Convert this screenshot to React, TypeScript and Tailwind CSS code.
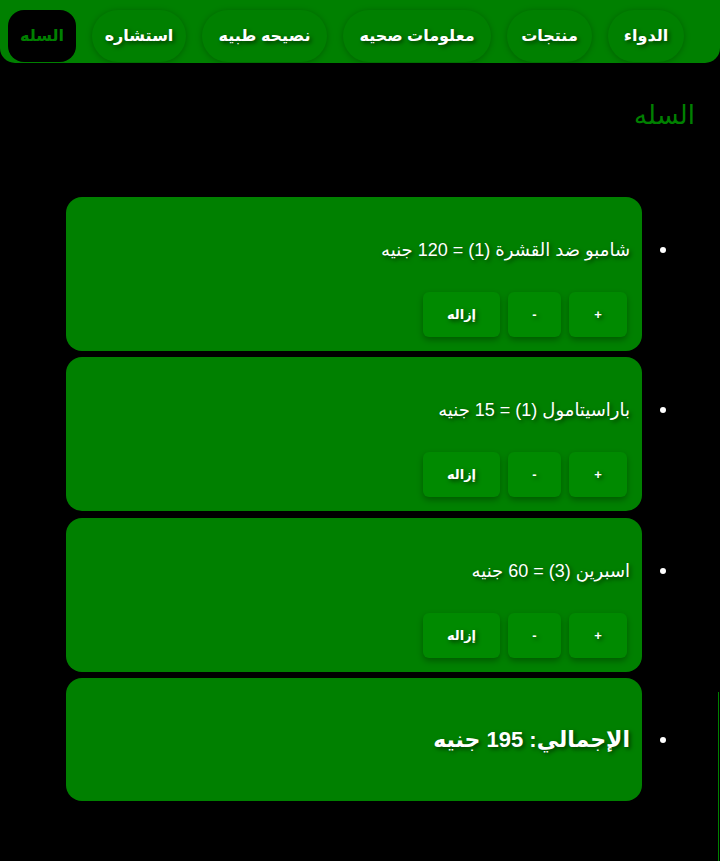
const navItems = [
  { label: "الدواء", w: "w-[76px]" },
  { label: "منتجات", w: "w-[85px]" },
  { label: "معلومات صحيه", w: "w-[148px]" },
  { label: "نصيحه طبيه", w: "w-[125px]" },
  { label: "استشاره", w: "w-[94px]" },
];

const cartItems = [
  { name: "شامبو ضد القشرة", qty: 1, total: 120 },
  { name: "باراسيتامول", qty: 1, total: 15 },
  { name: "اسبرين", qty: 3, total: 60 },
];

const shadowText = "[text-shadow:2px_2px_4px_rgba(0,0,0,0.55)]";

function Bullet({ top }: { top: string }) {
  return (
    <div className={`w-[78px] shrink-0 pr-[54px] ${top}`}>
      <div className="w-[6px] h-[6px] rounded-full bg-white" />
    </div>
  );
}

function CartButton({ label, w }: { label: string; w: string }) {
  return (
    <button
      className={`${w} h-[45px] rounded-[6px] bg-[#008a00] text-white text-[13px] font-bold shadow-[0_3px_6px_rgba(0,0,0,0.3)] ${shadowText}`}
    >
      {label}
    </button>
  );
}

export default function App() {
  return (
    <div
      dir="rtl"
      className="relative min-h-screen bg-black font-['Liberation_Sans','DejaVu_Sans',sans-serif]"
    >
      <nav className="h-[63px] bg-[#008000] rounded-b-[15px] flex items-start gap-4 pt-[10px] pr-[36px]">
        {navItems.map((item) => (
          <a
            key={item.label}
            className={`${item.w} h-[52px] rounded-[26px] flex items-center justify-center text-white text-[16px] font-bold shadow-[0_1px_6px_rgba(0,0,0,0.25)] ${shadowText}`}
          >
            {item.label}
          </a>
        ))}
        <a className="w-[68px] h-[52px] rounded-[16px] bg-black flex items-center justify-center text-[#008000] text-[16px] font-bold">
          السله
        </a>
      </nav>

      <h2 className="pr-[25px] pt-[35px] text-[26px] leading-[34px] text-[#008000]">
        السله
      </h2>

      <ul className="mt-[65px] flex flex-col gap-[6.4px]">
        {cartItems.map((item) => (
          <li key={item.name} className="flex items-start">
            <Bullet top="pt-[50px]" />
            <div className="w-[576px] rounded-[16px] bg-[#008000] pr-[12px] pt-[42px] pb-[14px] shadow-[0_4px_8px_rgba(0,0,0,0.5)]">
              <p className={`text-white text-[18px] leading-[22px] ${shadowText}`}>
                {item.name} ({item.qty}) = {item.total} جنيه
              </p>
              <div className="mt-[31px] mr-[3px] flex gap-2">
                <CartButton label="+" w="w-[58px]" />
                <CartButton label="-" w="w-[53px]" />
                <CartButton label="إزاله" w="w-[77px]" />
              </div>
            </div>
          </li>
        ))}
        <li className="flex items-start">
          <Bullet top="pt-[59px]" />
          <div className="w-[576px] h-[123px] rounded-[16px] bg-[#008000] pr-[12px] flex items-center shadow-[0_4px_8px_rgba(0,0,0,0.5)]">
            <p className={`text-white text-[22px] font-bold leading-[26px] ${shadowText}`}>
              الإجمالي: 195 جنيه
            </p>
          </div>
        </li>
      </ul>

      <div className="absolute right-[1px] top-[692px] w-px h-[169px] bg-[#008000]" />
    </div>
  );
}
